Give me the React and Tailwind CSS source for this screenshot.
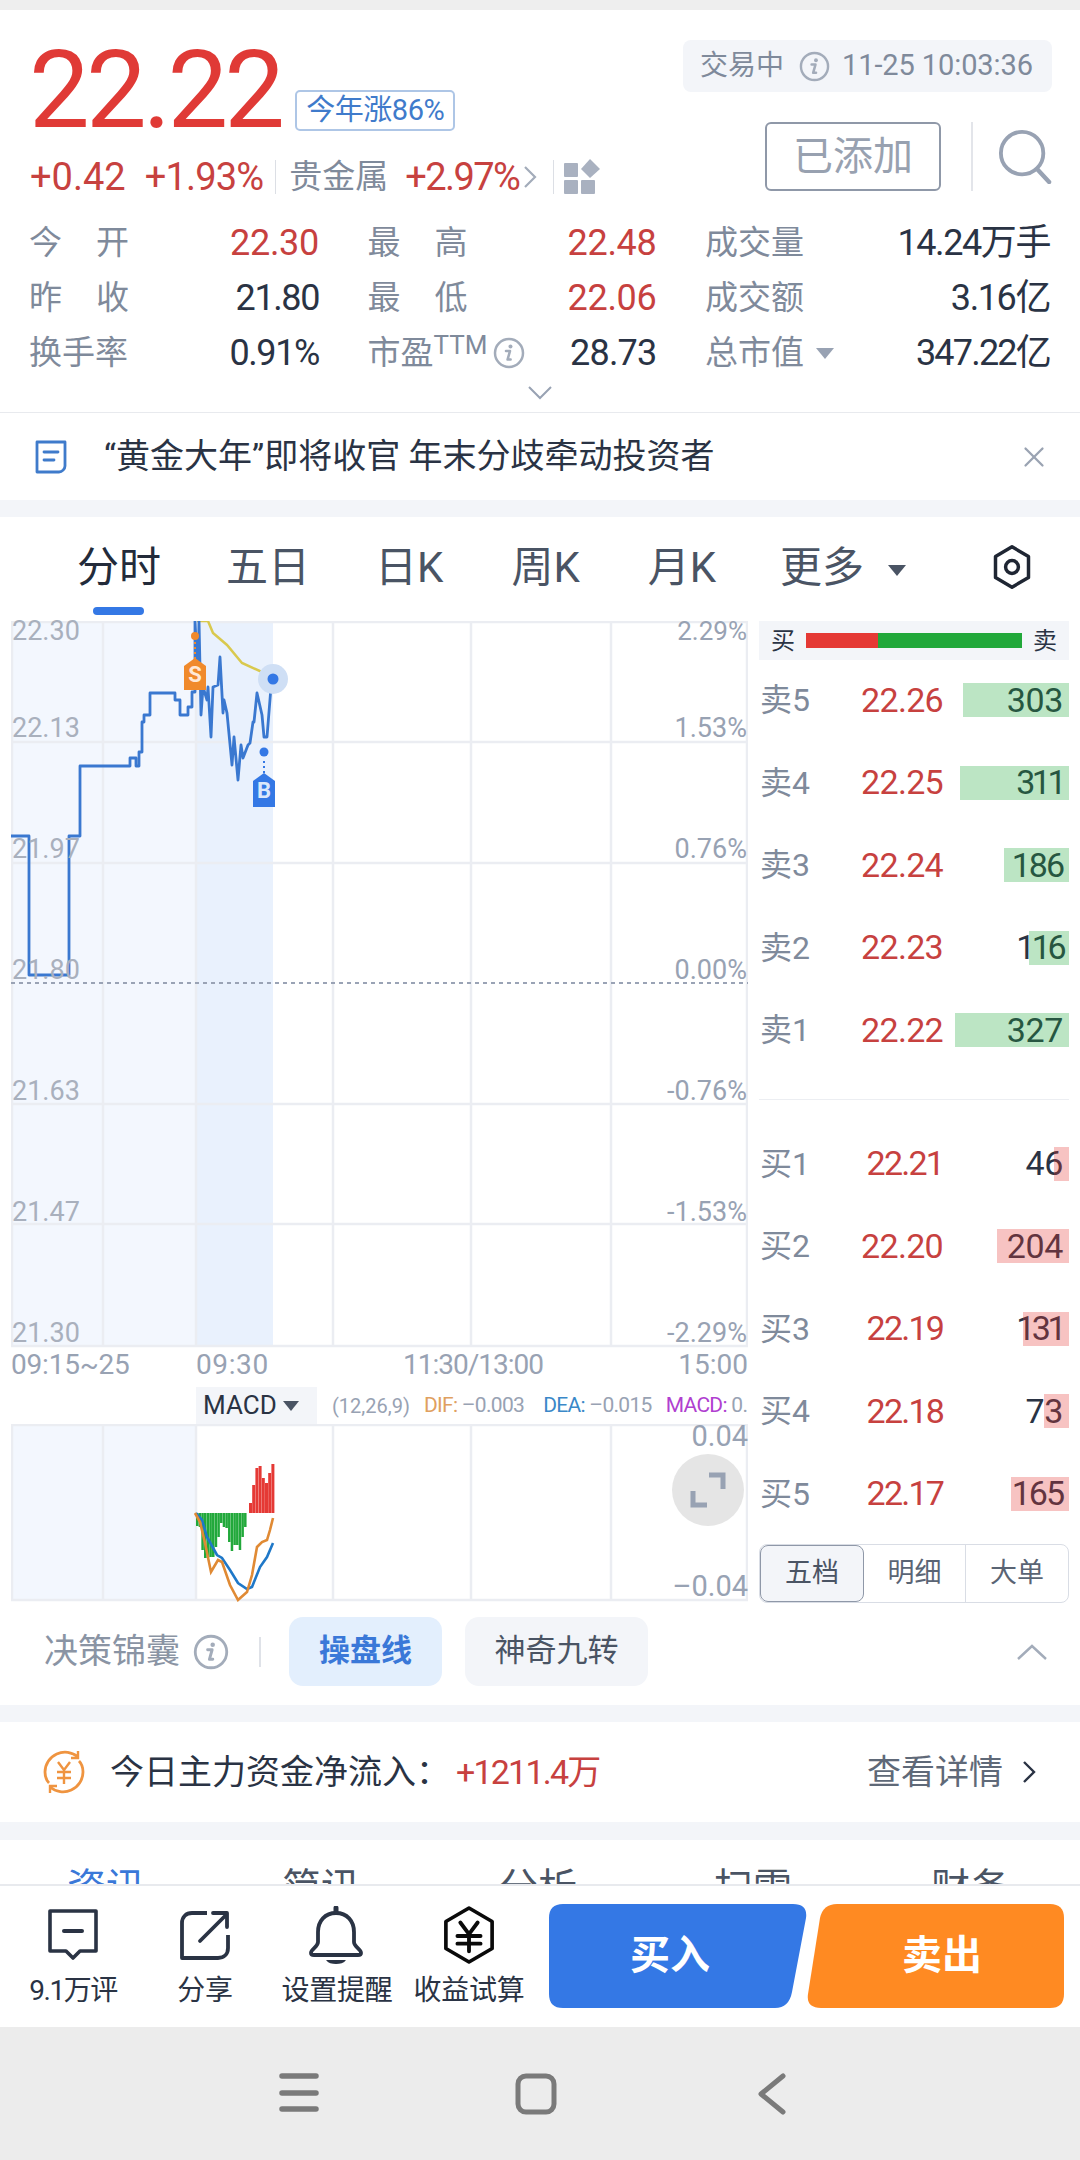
import { X } from "lucide-react";

const BLUE = "#3478e5";

const stats = [
  [["今", "开"], "22.30", true, ["最", "高"], "22.48", true, ["成交量"], "14.24万手", false],
  [["昨", "收"], "21.80", false, ["最", "低"], "22.06", true, ["成交额"], "3.16亿", false],
];

// last item: tracking for the quantity, Roboto's 1 is wider than the one in the picture
const sells = [
  ["卖5", "22.26", "303", 106, "tracking-[-0.4px]"],
  ["卖4", "22.25", "311", 109, "tracking-[-3.5px]"],
  ["卖3", "22.24", "186", 65, "tracking-[-2px]"],
  ["卖2", "22.23", "116", 40, "tracking-[-3.5px]"],
  ["卖1", "22.22", "327", 114, "tracking-[-0.4px]"],
];

const buys = [
  ["买1", "22.21", "46", 15, "tracking-[-0.4px]"],
  ["买2", "22.20", "204", 72, "tracking-[-0.4px]"],
  ["买3", "22.19", "131", 46, "tracking-[-3.5px]"],
  ["买4", "22.18", "73", 25, "tracking-[-0.4px]"],
  ["买5", "22.17", "165", 58, "tracking-[-2px]"],
];

const axisRows = [
  ["22.13", "1.53%"],
  ["21.97", "0.76%"],
  ["21.80", "0.00%"],
  ["21.63", "-0.76%"],
  ["21.47", "-1.53%"],
  ["21.30", "-2.29%"],
];

const priceLine =
  "11,836 29,836 29,975 69,975 69,836 80,836 80,766 130,766 130,758 136,758 136,766 139,766 139,752 142,752 142,722 144,722 144,715 150,715 150,693 175,693 175,700 180,700 180,715 188,715 188,707 192,707 192,692 195,692 195,621 198,680 199,621 201,715 203,687 207,700 208,687 211,737 213,687 218,685 220,657 223,713 224,700 227,713 232,765 234,737 238,780 241,745 243,758 248,745 250,743 253,722 254,722 257,693 262,715 264,737 267,737 271,687 273,679";
const avgLine = "197,621 208,621 213,633 227,645 242,663 273,677";
const redBars = [1503, 1485, 1468, 1466, 1478, 1483, 1473, 1464];
const greenBars = [1526, 1527, 1550, 1558, 1558, 1557, 1557, 1547, 1537, 1523, 1527, 1528, 1542, 1551, 1545, 1545, 1550, 1537, 1527];
const difLine = "196,1513 202,1520 207,1537 217,1555 222,1558 230,1570 238,1583 247,1589 252,1587 260,1567 267,1557 273,1543";
const deaLine = "195,1513 200,1522 205,1543 211,1572 218,1560 222,1562 230,1585 238,1600 247,1592 252,1575 257,1547 262,1542 267,1540 270,1530 273,1518";

function InfoIcon({ className }) {
  return (
    <svg viewBox="0 0 32 32" className={className} fill="none">
      <circle cx="16" cy="16" r="14" stroke="#a3acba" strokeWidth="2.5" />
      <circle cx="17.5" cy="9.5" r="2" fill="#a3acba" />
      <path d="M13 14h4l-2.400 8.500h3" stroke="#a3acba" strokeWidth="2.600" strokeLinecap="round" strokeLinejoin="round" />
    </svg>
  );
}

function Label({ parts }) {
  return (
    <span className="flex w-[100px] justify-between text-[33px] text-[#7f8a9b]">
      {parts.map((p) => (
        <span key={p}>{p}</span>
      ))}
    </span>
  );
}

function StatCell({ parts, value, red }) {
  const tight = value.includes("1") ? "tracking-[-1.4px]" : "tracking-[-0.3px]";
  return (
    <div className="flex h-[55px] items-center justify-between">
      <Label parts={parts} />
      <span className={`text-[36px] ${tight} ${red ? "text-[#c7413f]" : "text-[#2a3344]"}`}>{value}</span>
    </div>
  );
}

function Header() {
  return (
    <div className="h-[403px] shrink-0 border-b border-[#e8eaee] bg-white">
      <div className="flex h-[205.5px] justify-between">
        <div className="pl-[29px] pt-[26px]">
          <div className="flex h-[108px] items-start">
            <span className="text-[108px] leading-[108px] tracking-[-3.8px] text-[#e03a36]">22.22</span>
            <span className="ml-[14px] mt-[54px] flex h-[41px] w-[160px] items-center justify-center rounded-[5px] border-2 border-[#aec6e6] text-[29px] tracking-[-0.5px] text-[#3f7bcb]">
              今年涨86%
            </span>
          </div>
          <div className="flex h-[66px] items-center">
            <span className="ml-[1px] text-[38px] text-[#c7413f]">+0.42</span>
            <span className="ml-[19px] text-[38px] tracking-[-0.8px] text-[#c7413f]">+1.93%</span>
            <span className="ml-[12px] h-[34px] w-px bg-[#dcdfe5]" />
            <span className="ml-[13px] text-[33px] text-[#7f8a9b]">贵金属</span>
            <span className="ml-[17px] text-[38px] tracking-[-1.6px] text-[#c7413f]">+2.97%</span>
            <svg viewBox="0 0 14 24" className="ml-[4px] h-[24px] w-[14px]" fill="none">
              <path d="M2 2l10 10L2 22" stroke="#a3acba" strokeWidth="2.200" />
            </svg>
            <span className="ml-[16px] h-[34px] w-px bg-[#dcdfe5]" />
            <svg viewBox="0 0 36 36" className="ml-[10px] h-[36px] w-[36px]" fill="#a9b1c0">
              <rect x="0" y="4" width="14" height="14" rx="1" />
              <rect x="0" y="21" width="14" height="14" rx="1" />
              <rect x="17" y="21" width="14" height="14" rx="1" />
              <path d="M26 0l10 10-10 9-9-9z" />
            </svg>
          </div>
        </div>
        <div className="flex flex-col items-end pr-[28px] pt-[30px]">
          <div className="flex h-[52px] w-[369px] items-center rounded-[8px] bg-[#f3f5f9] pl-[17px] text-[28px] text-[#7f8a9b]">
            <span>交易中</span>
            <InfoIcon className="ml-[15px] h-[31px] w-[31px]" />
            <span className="ml-[12px] text-[29px] tracking-[-0.1px]">11-25 10:03:36</span>
          </div>
          <div className="mt-[30px] flex h-[69px] items-center">
            <div className="flex h-[69px] w-[176px] items-center justify-center rounded-[6px] border-2 border-[#8f98a8] text-[40px] text-[#98a1b0]">
              已添加
            </div>
            <span className="ml-[30px] h-[69px] w-[2px] bg-[#e3e5ea]" />
            <svg viewBox="0 0 54 56" className="ml-[25px] h-[54px] w-[54px]" fill="none">
              <circle cx="24" cy="24" r="22" stroke="#98a2b3" strokeWidth="4" />
              <path d="M40 41l12 13" stroke="#98a2b3" strokeWidth="4.500" strokeLinecap="round" />
            </svg>
          </div>
        </div>
      </div>
      <div className="ml-[29px] grid w-[1021px] grid-cols-[290px_289px_345px] gap-x-[48.5px]">
        {stats.map((r) => (
          <div key={r[1]} className="contents">
            <StatCell parts={r[0]} value={r[1]} red={r[2]} />
            <StatCell parts={r[3]} value={r[4]} red={r[5]} />
            <StatCell parts={r[6]} value={r[7]} red={r[8]} />
          </div>
        ))}
        <StatCell parts={["换手率"]} value="0.91%" />
        <div className="flex h-[55px] items-center justify-between">
          <span className="flex items-center text-[33px] text-[#7f8a9b]">
            市盈<sup className="relative -top-[8px] text-[26px]">TTM</sup>
            <InfoIcon className="ml-[6px] h-[32px] w-[32px]" />
          </span>
          <span className="text-[36px] tracking-[-0.8px] text-[#2a3344]">28.73</span>
        </div>
        <div className="flex h-[55px] items-center justify-between">
          <span className="flex items-center text-[33px] text-[#7f8a9b]">
            总市值
            <span className="ml-[12px] h-0 w-0 border-x-[9px] border-t-[11px] border-x-transparent border-t-[#98a2b3]" />
          </span>
          <span className="text-[36px] tracking-[-1.8px] text-[#2a3344]">347.22亿</span>
        </div>
      </div>
      <div className="flex justify-center pt-[5px]">
        <svg viewBox="0 0 24 14" className="h-[14px] w-[24px]" fill="none">
          <path d="M1 1l11 11L23 1" stroke="#98a2b3" strokeWidth="2" />
        </svg>
      </div>
    </div>
  );
}

function NewsBar() {
  return (
    <div className="flex h-[87px] shrink-0 items-center bg-white pl-[35px] pr-[29px]">
      <svg viewBox="0 0 32 34" className="h-[34px] w-[32px]" fill="none" stroke="#3f7bcb" strokeWidth="2.800">
        <path d="M2 2h28v24c0 3-3 6-6 6H2z" strokeLinejoin="round" />
        <path d="M9 12h14M9 20h10" strokeLinecap="round" />
      </svg>
      <span className="ml-[37px] text-[34px] text-[#2a3344]">“黄金大年”即将收官 年末分歧牵动投资者</span>
      <X className="ml-auto h-[34px] w-[34px] text-[#9aa3b2]" strokeWidth={1.6} />
    </div>
  );
}

function ChartTabs() {
  return (
    <div className="flex h-[104px] items-center pl-[77px] pb-[4px] text-[42px] text-[#4a5464]">
      <span className="relative text-[#232b3a]">
        分时
        <span className="absolute -bottom-[16px] left-[16px] h-[8px] w-[51px] rounded-full bg-[#3478e5]" />
      </span>
      <span className="ml-[65px]">五日</span>
      <span className="ml-[65px]">日K</span>
      <span className="ml-[68px]">周K</span>
      <span className="ml-[68px]">月K</span>
      <span className="ml-[64px] flex items-center">
        更多
        <span className="ml-[24px] mt-[6px] h-0 w-0 border-x-[9px] border-t-[11px] border-x-transparent border-t-[#4a5464]" />
      </span>
      <svg viewBox="0 0 44 48" className="ml-[85px] h-[44px] w-[42px]" fill="none" stroke="#1f2633" strokeWidth="3.800">
        <path d="M22 2l18 10.500v23L22 46 4 35.500v-23z" strokeLinejoin="round" />
        <circle cx="22" cy="24" r="7" />
      </svg>
    </div>
  );
}

function MinuteChart() {
  return (
    <div className="relative h-[725px] w-[737px]">
      <svg viewBox="11 621 737 727" className="h-[727px] w-[737px]" fill="none">
        <rect x="11" y="621" width="184" height="725" fill="#f3f7fe" />
        <rect x="195" y="621" width="78" height="725" fill="#e9f1fd" />
        {[742, 863, 1104, 1224].map((y) => (
          <path key={y} d={`M11 ${y}H748`} stroke="#ebedf2" strokeWidth="2.500" />
        ))}
        <path d="M11 622H748M11 1346H748" stroke="#ebedf2" strokeWidth="2.500" />
        {[12, 103, 196, 333, 471, 611, 747].map((x) => (
          <path key={x} d={`M${x} 621V1346`} stroke="#ebedf2" strokeWidth="2.500" />
        ))}
        <path d="M11 983H748" stroke="#9aa3b5" strokeWidth="2" strokeDasharray="4 4" />
        <polyline points={avgLine} stroke="#d9c94e" strokeWidth="2.500" />
        <polyline points={priceLine} stroke="#3a78d0" strokeWidth="2.800" strokeLinejoin="round" />
        <circle cx="273" cy="679" r="15" fill="#cfdff5" />
        <circle cx="273" cy="679" r="5.500" fill={BLUE} />
        <circle cx="195" cy="636" r="4" fill="#f08a2c" />
        <path d="M195 642V660" stroke="#f08a2c" strokeWidth="2" strokeDasharray="2 3" />
        <path d="M195 658l11 8v24h-22v-24z" fill="#f08a2c" />
        <circle cx="264" cy="752" r="4.500" fill={BLUE} />
        <path d="M264 761V774" stroke={BLUE} strokeWidth="2" strokeDasharray="2 3" />
        <path d="M264 773l11 8v26h-22v-26z" fill={BLUE} />
      </svg>
      <span className="absolute left-[173px] top-[43px] flex w-[22px] justify-center text-[22px] font-bold leading-none text-[#ffe9d6]">S</span>
      <span className="absolute left-[242px] top-[159px] flex w-[22px] justify-center text-[22px] font-bold leading-none text-[#dbe8fb]">B</span>
      <div className="absolute inset-0 flex flex-col text-[27px] leading-[30px] text-[#a9b0bd]">
        <div className="-mt-[5px] mb-[67px] flex justify-between px-[1px]">
          <span>22.30</span>
          <span className="text-[26px] text-[#98a2b3]">2.29%</span>
        </div>
        <div className="flex flex-col gap-[91px]">
          {axisRows.map(([a, b]) => (
            <div key={a} className="flex justify-between px-[1px]">
              <span>{a}</span>
              <span className="text-[#98a2b3]">{b}</span>
            </div>
          ))}
        </div>
      </div>
    </div>
  );
}

function MacdChart() {
  return (
    <div className="relative h-[176px] w-[737px]">
      <svg viewBox="11 1424 737 178" className="h-[178px] w-[737px]" fill="none">
        <rect x="11" y="1424" width="184" height="176" fill="#f3f7fe" />
        <path d="M11 1425H748M11 1600H748" stroke="#ebedf2" strokeWidth="2.500" />
        {[12, 103, 196, 333, 471, 611, 747].map((x) => (
          <path key={x} d={`M${x} 1424V1600`} stroke="#ebedf2" strokeWidth="2.500" />
        ))}
        {greenBars.map((y, i) => (
          <rect key={i} x={196 + i * 2.67} y="1513" width="2.500" height={y - 1513} fill="#21a83a" />
        ))}
        {redBars.map((y, i) => (
          <rect key={i} x={249 + i * 3.2} y={y} width="3" height={1513 - y} fill="#e53935" />
        ))}
        <polyline points={difLine} stroke="#1f78c8" strokeWidth="2.600" />
        <polyline points={deaLine} stroke="#e08a34" strokeWidth="2.600" />
      </svg>
      <div className="absolute inset-0 flex flex-col items-end justify-between pb-[1px] text-[29px] leading-[26px] text-[#98a2b3]">
        <span className="-mt-[1px]">0.04</span>
        <span>–0.04</span>
      </div>
      <div className="absolute left-[661px] top-[30px] flex h-[72px] w-[72px] items-center justify-center rounded-full bg-[#e5e5e5]">
        <svg viewBox="0 0 36 36" className="h-[36px] w-[36px]" fill="none" stroke="#98a2b3" strokeWidth="5">
          <path d="M19 3h14v14M3 19v14h14" />
        </svg>
      </div>
    </div>
  );
}

function BookRow({ row, color }) {
  const priceTight = row[1].includes("1") ? "tracking-[-1.8px]" : "tracking-[-0.7px]";
  return (
    <div className="flex h-[82.5px] items-center pl-[1px] text-[32px]">
      <span className="w-[90px] text-[#7f8a9b]">{row[0]}</span>
      <span className={`w-[93px] text-right text-[34px] text-[#c7413f] ${priceTight}`}>{row[1]}</span>
      <span className={`relative flex h-[34px] flex-1 items-center justify-end pr-[6px] text-[34px] text-[#2a3344] ${row[4]}`}>
        {row[2]}
        <span className={`absolute right-0 top-0 h-[34px] ${color}`} style={{ width: row[3] }} />
      </span>
    </div>
  );
}

function OrderBook() {
  return (
    <div className="ml-[11px] w-[310px]">
      <div className="flex h-[39px] items-center bg-[#f3f5f9] px-[12px] text-[24px] text-[#2a3344]">
        <span>买</span>
        <span className="ml-[11px] h-[15px] w-[72px] bg-[#e53935]" />
        <span className="mr-[11px] h-[15px] flex-1 bg-[#21a83a]" />
        <span>卖</span>
      </div>
      <div className="-mt-[1px]">
        {sells.map((r) => (
          <BookRow key={r[0]} row={r} color="bg-[#21a83a]/30" />
        ))}
      </div>
      <div className="mt-[27px] mb-[23px] h-px bg-[#eceef2]" />
      {buys.map((r) => (
        <BookRow key={r[0]} row={r} color="bg-[#e53935]/30" />
      ))}
      <div className="mt-[9px] flex h-[59px] rounded-[8px] border border-[#d9dde5] text-[27px] text-[#5a6474]">
        <span className="flex w-[104px] items-center justify-center rounded-[8px] border border-[#8f98a8] bg-[#f3f5f9] text-[#4a5464]">五档</span>
        <span className="flex w-[102px] items-center justify-center border-r border-[#d9dde5]">明细</span>
        <span className="flex flex-1 items-center justify-center">大单</span>
      </div>
    </div>
  );
}

function ChartCard() {
  return (
    <div className="h-[1188px] shrink-0 bg-white">
      <ChartTabs />
      <div className="flex h-[979px] pl-[11px]">
        <div className="w-[737px]">
          <MinuteChart />
          <div className="flex h-[41px] items-center justify-between pb-[3px] text-[28px] text-[#98a2b3]">
            <span className="w-[185px] tracking-[-0.2px]">09:15~25</span>
            <span className="w-[207px] tracking-[0.6px]">09:30</span>
            <span className="tracking-[-1px]">11:30/13:00</span>
            <span className="ml-auto">15:00</span>
          </div>
          <div className="flex h-[37px] items-center overflow-hidden whitespace-nowrap text-[20px] text-[#98a2b3]">
            <span className="ml-[185px] flex h-[37px] w-[121px] shrink-0 items-center bg-[#f3f5f9] pl-[7px] text-[26px] text-[#2a3344]">
              MACD
              <span className="ml-[6px] h-0 w-0 border-x-[8px] border-t-[10px] border-x-transparent border-t-[#4a5464]" />
            </span>
            <span className="ml-[15px] shrink-0">(12,26,9)</span>
            <span className="ml-[14px] flex shrink-0 text-[21px] tracking-[-0.7px]">
              <span className="text-[#e0a060]">DIF:</span>&nbsp;–0.003
            </span>
            <span className="ml-[19px] flex shrink-0 text-[21px] tracking-[-0.7px]">
              <span className="text-[#3a88c8]">DEA:</span>&nbsp;–0.015
            </span>
            <span className="ml-[14px] flex shrink-0 text-[21px] tracking-[-0.7px]">
              <span className="text-[#b040d0]">MACD:</span>&nbsp;0.
            </span>
          </div>
          <MacdChart />
        </div>
        <OrderBook />
      </div>
      <div className="flex h-[105px] items-center pl-[44px] pb-[2px]">
        <span className="text-[34px] text-[#8a94a4]">决策锦囊</span>
        <InfoIcon className="ml-[13px] h-[36px] w-[36px]" />
        <span className="ml-[30px] h-[30px] w-[2px] bg-[#dfe2e8]" />
        <span className="ml-[28px] flex h-[69px] w-[153px] items-center justify-center rounded-[14px] bg-[#e3effd] text-[31px] font-bold text-[#3a78d8]">操盘线</span>
        <span className="ml-[23px] flex h-[69px] w-[183px] items-center justify-center rounded-[14px] bg-[#f3f5f9] text-[31px] text-[#4a5464]">神奇九转</span>
        <svg viewBox="0 0 32 18" className="ml-auto mr-[32px] h-[18px] w-[32px]" fill="none">
          <path d="M2 16L16 3l14 13" stroke="#a3acba" strokeWidth="2.400" />
        </svg>
      </div>
    </div>
  );
}

function FundRow() {
  return (
    <div className="flex h-[100px] shrink-0 items-center bg-white pl-[42px] pr-[44px]">
      <svg viewBox="0 0 44 46" className="h-[46px] w-[44px]" fill="none" stroke="#ef9440" strokeWidth="2.800">
        <path d="M36 8A20 20 0 0 0 3 23c0 4 1 8 4 11" />
        <path d="M8 38a20 20 0 0 0 33-15c0-4-1-8-4-11" />
        <path d="M36 2v7h-7M8 44v-7h7" strokeWidth="2.400" />
        <path d="M16 13l6 8 6-8M15 23h14M15 29h14M22 21v14" strokeWidth="2.400" />
      </svg>
      <span className="ml-[24px] text-[34px] text-[#2a3344]">今日主力资金净流入：</span>
      <span className="ml-[6px] text-[34px] tracking-[-1.8px] text-[#c7413f]">+1211.4万</span>
      <span className="ml-auto mr-[-1px] text-[34px] text-[#5f6978]">查看详情</span>
      <svg viewBox="0 0 14 24" className="ml-[20px] h-[24px] w-[14px]" fill="none">
        <path d="M2 2l10 10L2 22" stroke="#2a3344" strokeWidth="2.400" />
      </svg>
    </div>
  );
}

function InfoTabs() {
  return (
    <div className="h-[44px] shrink-0 overflow-hidden bg-white">
      <div className="flex pt-[25px] text-[39px] leading-[46px] text-[#4a5464]">
        <span className="ml-[67px] w-[215px] text-[#3a78d8]">资讯</span>
        <span className="w-[217px]">简讯</span>
        <span className="w-[215px]">分析</span>
        <span className="w-[217px]">扫雷</span>
        <span>财务</span>
      </div>
    </div>
  );
}

function Tool({ label, tight, children }) {
  return (
    <div className="flex w-[132px] flex-col items-center">
      <div className="flex h-[62px] items-center justify-center">{children}</div>
      <span className={`mt-[9px] whitespace-nowrap text-[28px] leading-[32px] text-[#2a3344] ${tight ? "tracking-[-1.5px]" : "tracking-[-0.2px]"}`}>{label}</span>
    </div>
  );
}

function BottomBar() {
  return (
    <div className="flex h-[143px] shrink-0 items-center border-t-2 border-[#e8eaee] bg-white pb-[2px] pl-[7px]">
      <div className="flex">
        <Tool label="9.1万评" tight>
          <svg viewBox="0 0 52 52" className="h-[52px] w-[52px]" fill="none" stroke="#2a3344" strokeWidth="3.600" strokeLinejoin="round">
            <path d="M3 2h46v40H33l-7 7-7-7H3z" />
            <path d="M17 22h18" strokeWidth="4" strokeLinecap="round" />
          </svg>
        </Tool>
        <Tool label="分享">
          <svg viewBox="0 0 50 52" className="h-[52px] w-[50px]" fill="none" stroke="#2a3344" strokeWidth="3.800" strokeLinejoin="round">
            <path d="M27 4H12C6 4 2 8 2 14v35h36c6 0 10-4 10-10V26" />
            <path d="M20 32L47 5M33 4h14v14" strokeLinecap="round" />
          </svg>
        </Tool>
        <Tool label="设置提醒">
          <svg viewBox="0 0 54 58" className="-ml-[3px] h-[58px] w-[54px]" fill="none" stroke="#2a3344" strokeWidth="3.800" strokeLinejoin="round">
            <path d="M27 7C16 7 9 15 9 26v10c0 5-7 7-7 11 0 2 1 2 3 2h44c2 0 3 0 3-2 0-4-7-6-7-11V26c0-11-7-19-18-19z" />
            <path d="M27 2v4" strokeWidth="5" strokeLinecap="round" />
            <path d="M17 54h20c-2 3-6 4-10 4s-8-1-10-4z" fill="#2a3344" stroke="none" />
          </svg>
        </Tool>
        <Tool label="收益试算">
          <svg viewBox="0 0 54 60" className="h-[58px] w-[52px]" fill="none" stroke="#0a0a0a" strokeWidth="3.800" strokeLinejoin="round">
            <path d="M27 2l24 14v28L27 58 3 44V16z" />
            <path d="M18 17l9 12 9-12M15 31h24M15 39h24M27 29v18" strokeWidth="4" strokeLinecap="round" />
          </svg>
        </Tool>
      </div>
      <div className="relative ml-[14px] flex h-[104px] w-[258px] items-center justify-center pr-[16px]">
        <svg viewBox="0 0 258 104" className="absolute inset-0 h-[104px] w-[258px]">
          <path d="M14 0H244Q259 0 257 14L243 88Q240 104 226 104H14Q0 104 0 90V14Q0 0 14 0Z" fill="#3478e5" />
        </svg>
        <span className="relative text-[40px] font-bold text-white">买入</span>
      </div>
      <div className="relative flex h-[104px] w-[257px] items-center justify-center pl-[13px]">
        <svg viewBox="0 0 257 104" className="absolute inset-0 h-[104px] w-[257px]">
          <path d="M30 0H243Q257 0 257 14V90Q257 104 243 104H14Q-1 104 1 90L13 14Q16 0 30 0Z" fill="#ff8a22" />
        </svg>
        <span className="relative text-[40px] font-bold text-white">卖出</span>
      </div>
    </div>
  );
}

function NavBar() {
  return (
    <div className="flex flex-1 items-start bg-[#ececec] pl-[279px] pt-[46px]">
      <svg viewBox="0 0 40 40" className="h-[40px] w-[40px]" fill="none" stroke="#7a7a7a" strokeWidth="5.500" strokeLinecap="round">
        <path d="M3 3h34M3 20h34M3 36h34" />
      </svg>
      <svg viewBox="0 0 42 42" className="ml-[196px] h-[42px] w-[42px]" fill="none" stroke="#7a7a7a" strokeWidth="5">
        <rect x="3" y="3" width="36" height="36" rx="8" />
      </svg>
      <svg viewBox="0 0 28 42" className="ml-[201px] h-[42px] w-[28px]" fill="none" stroke="#7a7a7a" strokeWidth="5" strokeLinecap="round" strokeLinejoin="round">
        <path d="M25 3L3 21l22 18" />
      </svg>
    </div>
  );
}

export default function App() {
  return (
    <div className="flex h-[2160px] w-[1080px] flex-col overflow-hidden bg-[#f3f5f9] font-[Roboto,'Noto_Sans_CJK_SC',sans-serif]">
      <div className="h-[10px] shrink-0 bg-[#eeeeee]" />
      <Header />
      <NewsBar />
      <div className="h-[17px] shrink-0" />
      <ChartCard />
      <div className="h-[17px] shrink-0" />
      <FundRow />
      <div className="h-[18px] shrink-0" />
      <InfoTabs />
      <BottomBar />
      <NavBar />
    </div>
  );
}
